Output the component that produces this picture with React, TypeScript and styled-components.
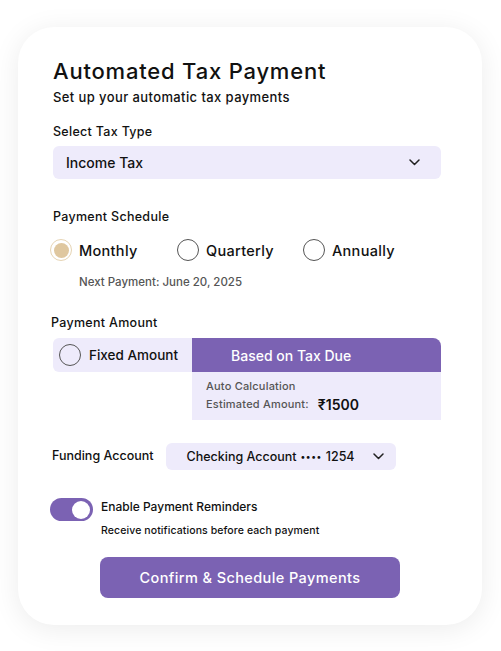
import React, { useState } from 'react';
import styled, { createGlobalStyle } from 'styled-components';

const GlobalStyle = createGlobalStyle`
  * { box-sizing: border-box; }
  body {
    margin: 0;
    background: #ffffff;
    font-family: Inter, "Noto Sans", sans-serif;
    color: #111;
  }
`;

const Page = styled.div`
  width: 501px;
  height: 651px;
  padding: 27px 19px 0 18px;
`;

const Card = styled.div`
  width: 464px;
  height: 598px;
  background: #fff;
  border-radius: 36px;
  box-shadow: 0 4px 28px rgba(0, 0, 0, 0.08);
  padding: 31px 41px 0 35px;
  display: flex;
  flex-direction: column;
`;

const Title = styled.h1`
  margin: 0;
  font-size: 22px;
  font-weight: 500;
  line-height: 26px;
  letter-spacing: 0.8px;
  color: #111;
`;

const Subtitle = styled.p`
  margin: 4px 0 0;
  font-size: 13px;
  font-weight: 500;
  line-height: 18px;
  letter-spacing: 0.4px;
`;

const Label = styled.div<{ $mt: number }>`
  margin-top: ${({ $mt }) => $mt}px;
  font-size: 12.5px;
  font-weight: 500;
  line-height: 18px;
  letter-spacing: 0.3px;
`;

const SelectBox = styled.div<{ $w?: number; $h: number; $pl: number; $pr: number }>`
  width: ${({ $w }) => ($w ? `${$w}px` : '100%')};
  height: ${({ $h }) => $h}px;
  background: #eeebfb;
  border-radius: 6px;
  display: flex;
  align-items: center;
  justify-content: space-between;
  padding: 0 ${({ $pr }) => $pr}px 0 ${({ $pl }) => $pl}px;
  font-size: ${({ $h }) => ($h > 30 ? 14 : 12.5)}px;
  font-weight: 500;
`;

const TaxSelect = styled(SelectBox)`
  margin-top: 5px;
`;

const Dots = styled.span`
  font-size: 9px;
  letter-spacing: 0.5px;
  margin: 0 4px;
  vertical-align: 1px;
`;

const Chevron = () => (
  <svg width="11" height="7" viewBox="0 0 11 7" fill="none">
    <path d="M1 1l4.5 4.5L10 1" stroke="#222" strokeWidth="1.5" strokeLinecap="round" strokeLinejoin="round" />
  </svg>
);

const RadioRow = styled.div`
  display: flex;
  align-items: center;
  margin-top: 13px;
  margin-left: -3px;
`;

const RadioOption = styled.label<{ $w: number }>`
  width: ${({ $w }) => $w}px;
  display: flex;
  align-items: center;
  gap: 7px;
  font-size: 14.5px;
  font-weight: 500;
  letter-spacing: 0.3px;
  cursor: pointer;
`;

const RadioCircle = styled.span<{ $checked?: boolean }>`
  width: 22px;
  height: 22px;
  border-radius: 50%;
  flex-shrink: 0;
  border: 1.5px solid ${({ $checked }) => ($checked ? '#e6d4b4' : '#555')};
  display: flex;
  align-items: center;
  justify-content: center;
  &::after {
    content: '';
    width: 15px;
    height: 15px;
    border-radius: 50%;
    background: ${({ $checked }) => ($checked ? '#dfc79f' : 'transparent')};
  }
`;

const NextPayment = styled.div`
  margin: 14px 0 0 26px;
  font-size: 11.5px;
  font-weight: 500;
  color: #555;
`;

const AmountGrid = styled.div`
  margin-top: 6px;
  display: grid;
  grid-template-columns: 139px 249px;
  grid-template-rows: 34px 48px;
`;

const FixedTab = styled.div`
  background: #eeebfb;
  border-radius: 6px 0 0 6px;
  display: flex;
  align-items: center;
  gap: 8px;
  padding-left: 6px;
  font-size: 13.5px;
  font-weight: 500;
`;

const DueTab = styled.div`
  background: #7b62b3;
  color: #fff;
  border-radius: 0 8px 0 0;
  display: flex;
  align-items: center;
  padding-left: 39px;
  font-size: 14px;
  font-weight: 500;
`;

const CalcPanel = styled.div`
  grid-column: 2;
  background: #eeebfb;
  padding: 7px 0 0 14px;
  display: flex;
  flex-direction: column;
  gap: 2px;
`;

const CalcNote = styled.div`
  font-size: 11px;
  font-weight: 500;
  color: #555;
  line-height: 15px;
  letter-spacing: 0.2px;
`;

const EstimateRow = styled.div`
  display: flex;
  align-items: center;
  gap: 9px;
`;

const EstimateValue = styled.span`
  font-size: 14px;
  font-weight: 600;
  color: #111;
`;

const FundingRow = styled.div`
  margin-top: 23px;
  display: flex;
  align-items: center;
  gap: 12px;
  margin-left: -1px;
`;

const FundingLabel = styled.div`
  font-size: 12.5px;
  font-weight: 500;
  margin-top: -2px;
`;

const ReminderRow = styled.div`
  margin-top: 28px;
  margin-left: -3px;
  display: flex;
  gap: 8px;
`;

const Switch = styled.button<{ $on: boolean }>`
  width: 43px;
  height: 23px;
  border-radius: 12px;
  border: none;
  padding: 0 3px;
  background: ${({ $on }) => ($on ? '#7b62b3' : '#ccc')};
  display: flex;
  align-items: center;
  justify-content: ${({ $on }) => ($on ? 'flex-end' : 'flex-start')};
  cursor: pointer;
  flex-shrink: 0;
  &::after {
    content: '';
    width: 18px;
    height: 18px;
    border-radius: 50%;
    background: #fff;
  }
`;

const ReminderText = styled.div`
  display: flex;
  flex-direction: column;
  padding-top: 1px;
`;

const ReminderTitle = styled.div`
  font-size: 12px;
  font-weight: 500;
  line-height: 16px;
`;

const ReminderSub = styled.div`
  margin-top: 9px;
  font-size: 10.5px;
  font-weight: 500;
  line-height: 14px;
  letter-spacing: 0.1px;
`;

const ConfirmButton = styled.button`
  margin: 19px 0 0 47px;
  width: 300px;
  height: 41px;
  border: none;
  border-radius: 8px;
  background: #7b62b3;
  color: #fff;
  font-family: inherit;
  font-size: 14.5px;
  font-weight: 500;
  letter-spacing: 0.4px;
  cursor: pointer;
`;

const schedules = [
  { id: 'monthly', label: 'Monthly', w: 127 },
  { id: 'quarterly', label: 'Quarterly', w: 126 },
  { id: 'annually', label: 'Annually', w: 110 },
];

export default function App() {
  const [schedule, setSchedule] = useState('monthly');
  const [reminders, setReminders] = useState(true);

  return (
    <>
      <GlobalStyle />
      <Page>
        <Card>
          <Title>Automated Tax Payment</Title>
          <Subtitle>Set up your automatic tax payments</Subtitle>

          <Label $mt={17}>Select Tax Type</Label>
          <TaxSelect $h={33} $pl={13} $pr={21}>
            Income Tax
            <Chevron />
          </TaxSelect>

          <Label $mt={29}>Payment Schedule</Label>
          <RadioRow>
            {schedules.map((s) => (
              <RadioOption key={s.id} $w={s.w} onClick={() => setSchedule(s.id)}>
                <RadioCircle $checked={schedule === s.id} />
                {s.label}
              </RadioOption>
            ))}
          </RadioRow>
          <NextPayment>Next Payment: June 20, 2025</NextPayment>

          <Label $mt={25} style={{ marginLeft: -2 }}>Payment Amount</Label>
          <AmountGrid>
            <FixedTab>
              <RadioCircle />
              Fixed Amount
            </FixedTab>
            <DueTab>Based on Tax Due</DueTab>
            <CalcPanel>
              <CalcNote>Auto Calculation</CalcNote>
              <EstimateRow>
                <CalcNote>Estimated Amount:</CalcNote>
                <EstimateValue>₹1500</EstimateValue>
              </EstimateRow>
            </CalcPanel>
          </AmountGrid>

          <FundingRow>
            <FundingLabel>Funding Account</FundingLabel>
            <SelectBox $w={230} $h={27} $pl={21} $pr={12}>
              <span>
                Checking Account<Dots>••••</Dots>1254
              </span>
              <Chevron />
            </SelectBox>
          </FundingRow>

          <ReminderRow>
            <Switch $on={reminders} onClick={() => setReminders(!reminders)} />
            <ReminderText>
              <ReminderTitle>Enable Payment Reminders</ReminderTitle>
              <ReminderSub>Receive notifications before each payment</ReminderSub>
            </ReminderText>
          </ReminderRow>

          <ConfirmButton>Confirm &amp; Schedule Payments</ConfirmButton>
        </Card>
      </Page>
    </>
  );
}
